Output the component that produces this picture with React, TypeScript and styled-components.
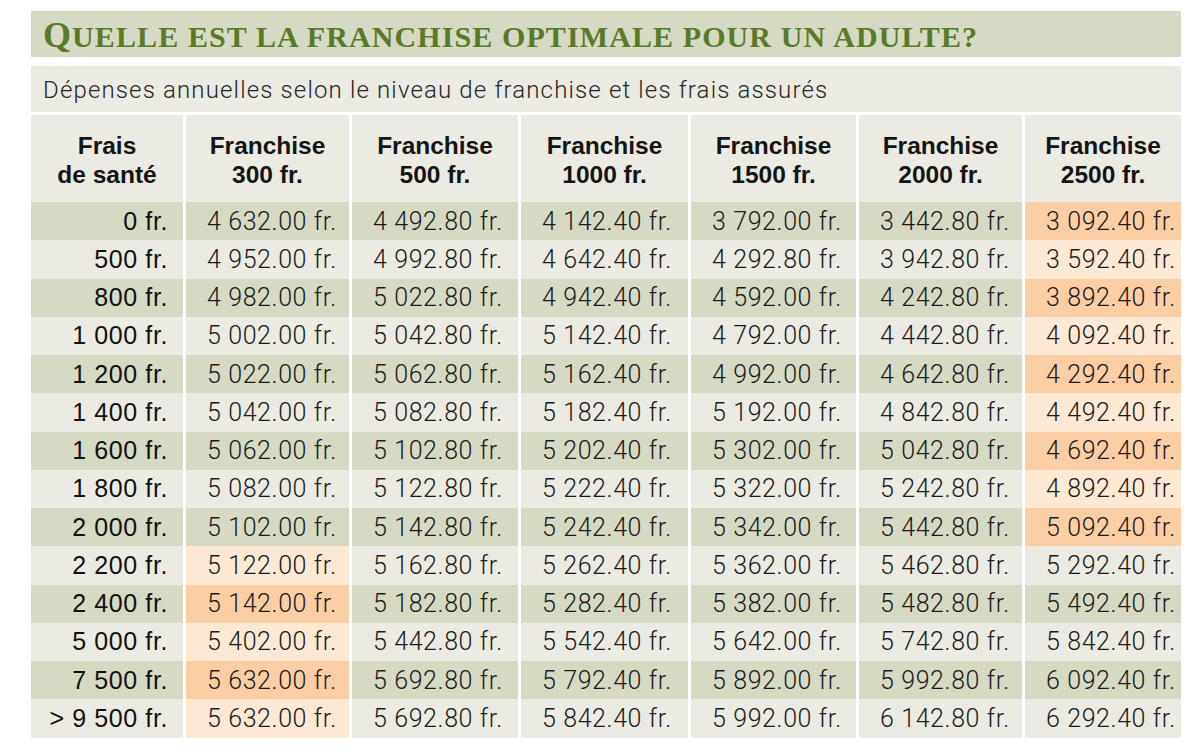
import React from "react";
import styled, { createGlobalStyle } from "styled-components";

const Global = createGlobalStyle`
  html, body { margin: 0; padding: 0; background: #ffffff; }
  body { font-family: "Liberation Sans", Arial, sans-serif; }
`;

const Page = styled.div`
  width: 1150px;
  padding: 11px 0 0 31px;
  display: flex;
  flex-direction: column;
`;

const TitleBand = styled.div`
  height: 46px;
  background: #d6d9c4;
  display: flex;
  align-items: center;
  padding-left: 12px;
  margin-bottom: 9px;
`;

const Title = styled.h1`
  margin: 0;
  font-family: "Liberation Serif", "Times New Roman", serif;
  font-weight: 700;
  color: #5a7a26;
  font-size: 30px;
  text-transform: uppercase;
  letter-spacing: 1.1px;
  line-height: 1;
  white-space: nowrap;
  padding-top: 2px;
`;

const Initial = styled.span`
  font-size: 36px;
`;

const SubBand = styled.div`
  height: 46px;
  background: #ebebe3;
  display: flex;
  align-items: center;
  padding-left: 12px;
  margin-bottom: 3px;
`;

const Subtitle = styled.p`
  margin: 0;
  font-family: Roboto, "Liberation Sans", sans-serif;
  font-weight: 300;
  font-size: 24px;
  letter-spacing: 1.15px;
  color: #262626;
  padding-top: 1px;
`;

const Table = styled.div`
  display: grid;
  grid-template-columns: 152px 163px 166px 167px 165px 163px 156px;
  grid-template-rows: 87px;
  grid-auto-rows: 38.25px;
  column-gap: 3px;
`;

const HeadCell = styled.div`
  background: #ebebe3;
  display: flex;
  align-items: center;
  justify-content: center;
  text-align: center;
  font-family: "Liberation Sans", Arial, sans-serif;
  font-weight: 700;
  font-size: 24.5px;
  line-height: 29px;
  color: #141414;
  padding-top: 3px;
  box-sizing: border-box;
`;

type Tone = "green" | "light";
type Mark = "none" | "hot";

const bg = (tone: Tone, mark: Mark) => {
  if (mark === "hot") return tone === "green" ? "#fdcea3" : "#fde9d4";
  return tone === "green" ? "#d6d9c4" : "#ebebe3";
};

const LabelCell = styled.div<{ $tone: Tone }>`
  background: ${(p) => bg(p.$tone, "none")};
  display: flex;
  align-items: center;
  justify-content: flex-end;
  padding-right: 15px;
  font-family: "Liberation Sans", Arial, sans-serif;
  font-size: 25px;
  letter-spacing: 0.6px;
  color: #111;
  white-space: nowrap;
`;

const ValueCell = styled.div<{ $tone: Tone; $mark: Mark }>`
  background: ${(p) => bg(p.$tone, p.$mark)};
  display: flex;
  align-items: center;
  justify-content: flex-start;
  padding-left: 21px;
  font-family: Roboto, "Liberation Sans", sans-serif;
  font-weight: 300;
  font-size: 25px;
  letter-spacing: 0.6px;
  color: #1a1a1a;
  white-space: nowrap;
`;

const headers: string[][] = [
  ["Frais", "de santé"],
  ["Franchise", "300 fr."],
  ["Franchise", "500 fr."],
  ["Franchise", "1000 fr."],
  ["Franchise", "1500 fr."],
  ["Franchise", "2000 fr."],
  ["Franchise", "2500 fr."],
];

const rows: { label: string; values: string[] }[] = [
  { label: "0 fr.", values: ["4 632.00", "4 492.80", "4 142.40", "3 792.00", "3 442.80", "3 092.40"] },
  { label: "500 fr.", values: ["4 952.00", "4 992.80", "4 642.40", "4 292.80", "3 942.80", "3 592.40"] },
  { label: "800 fr.", values: ["4 982.00", "5 022.80", "4 942.40", "4 592.00", "4 242.80", "3 892.40"] },
  { label: "1 000 fr.", values: ["5 002.00", "5 042.80", "5 142.40", "4 792.00", "4 442.80", "4 092.40"] },
  { label: "1 200 fr.", values: ["5 022.00", "5 062.80", "5 162.40", "4 992.00", "4 642.80", "4 292.40"] },
  { label: "1 400 fr.", values: ["5 042.00", "5 082.80", "5 182.40", "5 192.00", "4 842.80", "4 492.40"] },
  { label: "1 600 fr.", values: ["5 062.00", "5 102.80", "5 202.40", "5 302.00", "5 042.80", "4 692.40"] },
  { label: "1 800 fr.", values: ["5 082.00", "5 122.80", "5 222.40", "5 322.00", "5 242.80", "4 892.40"] },
  { label: "2 000 fr.", values: ["5 102.00", "5 142.80", "5 242.40", "5 342.00", "5 442.80", "5 092.40"] },
  { label: "2 200 fr.", values: ["5 122.00", "5 162.80", "5 262.40", "5 362.00", "5 462.80", "5 292.40"] },
  { label: "2 400 fr.", values: ["5 142.00", "5 182.80", "5 282.40", "5 382.00", "5 482.80", "5 492.40"] },
  { label: "5 000 fr.", values: ["5 402.00", "5 442.80", "5 542.40", "5 642.00", "5 742.80", "5 842.40"] },
  { label: "7 500 fr.", values: ["5 632.00", "5 692.80", "5 792.40", "5 892.00", "5 992.80", "6 092.40"] },
  { label: "> 9 500 fr.", values: ["5 632.00", "5 692.80", "5 842.40", "5 992.00", "6 142.80", "6 292.40"] },
];

const isHot = (r: number, c: number) => (c === 5 && r <= 8) || (c === 0 && r >= 9);

export default function App() {
  return (
    <>
      <Global />
      <Page>
        <TitleBand>
          <Title>
            <Initial>Q</Initial>uelle est la franchise optimale pour un adulte?
          </Title>
        </TitleBand>
        <SubBand>
          <Subtitle>Dépenses annuelles selon le niveau de franchise et les frais assurés</Subtitle>
        </SubBand>
        <Table>
          {headers.map((h, i) => (
            <HeadCell key={i}>
              <div>
                {h[0]}
                <br />
                {h[1]}
              </div>
            </HeadCell>
          ))}
          {rows.map((row, r) => {
            const tone: Tone = r % 2 === 0 ? "green" : "light";
            return (
              <React.Fragment key={r}>
                <LabelCell $tone={tone}>{row.label}</LabelCell>
                {row.values.map((v, c) => (
                  <ValueCell key={c} $tone={tone} $mark={isHot(r, c) ? "hot" : "none"}>
                    {v}&nbsp;fr.
                  </ValueCell>
                ))}
              </React.Fragment>
            );
          })}
        </Table>
      </Page>
    </>
  );
}
